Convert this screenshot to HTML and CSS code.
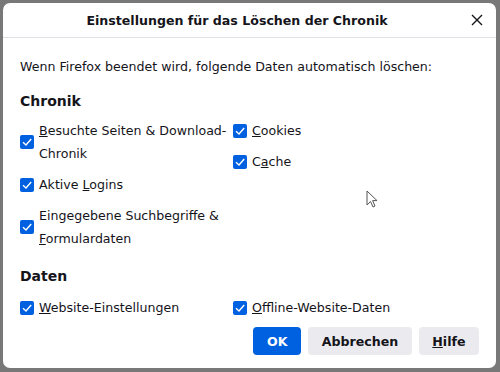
FILE: index.html
```html
<!DOCTYPE html>
<html lang="de">
<head>
    <meta charset="UTF-8">
    <title>Einstellungen für das Löschen der Chronik</title>
    <link rel="stylesheet" href="styles.css">
</head>
<body>
    <div class="dialog">
        <div class="dialog-header">
            <h1>Einstellungen für das Löschen der Chronik</h1>
            <button class="close-btn" aria-label="Schließen">
                <svg width="12" height="12" viewBox="0 0 12 12">
                    <path d="M1 1 L11 11 M11 1 L1 11" stroke="#15141a" stroke-width="1.4" fill="none"/>
                </svg>
            </button>
        </div>

        <div class="dialog-body">
            <p class="intro">Wenn Firefox beendet wird, folgende Daten automatisch löschen:</p>

            <h2 class="section-title chronik">Chronik</h2>
            <div class="option-grid">
                <div class="option-col">
                    <label class="option"><span class="box"></span><span><u>B</u>esuchte Seiten &amp; Download-<br>Chronik</span></label>
                    <label class="option"><span class="box"></span><span>Aktive <u>L</u>ogins</span></label>
                    <label class="option"><span class="box"></span><span>Eingegebene Suchbegriffe &amp;<br><u>F</u>ormulardaten</span></label>
                </div>
                <div class="option-col">
                    <label class="option"><span class="box"></span><span><u>C</u>ookies</span></label>
                    <label class="option"><span class="box"></span><span>C<u>a</u>che</span></label>
                </div>
            </div>

            <h2 class="section-title daten">Daten</h2>
            <div class="option-grid">
                <div class="option-col">
                    <label class="option"><span class="box"></span><span><u>W</u>ebsite-Einstellungen</span></label>
                </div>
                <div class="option-col">
                    <label class="option"><span class="box"></span><span><u>O</u>ffline-Website-Daten</span></label>
                </div>
            </div>

            <div class="button-row">
                <button class="btn btn-primary">OK</button>
                <button class="btn">Abbrechen</button>
                <button class="btn"><u>H</u>ilfe</button>
            </div>
        </div>
    </div>

    <svg class="cursor" width="12" height="19" viewBox="0 0 12 19">
        <path d="M1 1 L1 15 L4.5 11.5 L7 17 L9 16 L6.6 10.6 L11 10.6 Z" fill="#fff" stroke="#555" stroke-width="1"/>
    </svg>
</body>
</html>
```

FILE: styles.css
```css
body {
    margin: 0;
    background: #787878;
    font-family: "DejaVu Sans", sans-serif;
    color: #15141a;
    width: 500px;
    height: 372px;
    overflow: hidden;
}
.dialog {
    margin: 3px 0 0 3px;
    width: 493px;
    height: 365px;
    background: #fff;
    border-radius: 7px;
    box-sizing: border-box;
}
.dialog-header {
    height: 35px;
    border-bottom: 1px solid #e0e0e6;
    display: flex;
    align-items: center;
    box-sizing: border-box;
}
.dialog-header h1 {
    flex: 1;
    margin: 0;
    font-size: 12.6px;
    font-weight: 600;
    text-align: center;
}
.close-btn {
    flex: none;
    width: 12px;
    height: 12px;
    margin: 0 13px 0 0;
    border: none;
    background: none;
    padding: 0;
    display: flex;
    align-items: center;
    justify-content: center;
}
.dialog-body {
    padding: 17px 17px 0 17px;
}
.intro {
    margin: 0;
    font-size: 12.6px;
    line-height: 23px;
}
.section-title {
    margin: 0;
    font-size: 14px;
    font-weight: bold;
    line-height: 23px;
}
.section-title.chronik {
    margin-top: 12px;
    margin-bottom: 6px;
}
.section-title.daten {
    margin-top: 15px;
    margin-bottom: 8px;
}
.option-grid {
    display: grid;
    grid-template-columns: 213px 1fr;
}
.option-col {
    display: flex;
    flex-direction: column;
    gap: 8px;
}
.option {
    display: flex;
    align-items: center;
    gap: 5px;
    font-size: 12.6px;
    line-height: 23px;
}
.box {
    flex: none;
    width: 14px;
    height: 14px;
    border-radius: 2px;
    background: #0061e0 url("data:image/svg+xml,%3Csvg xmlns='http://www.w3.org/2000/svg' viewBox='0 0 14 14'%3E%3Cpath d='M3 7.2 L6 10 L11.2 4' stroke='white' stroke-width='1.4' fill='none'/%3E%3C/svg%3E") no-repeat center;
}
.button-row {
    display: flex;
    justify-content: flex-end;
    gap: 7px;
    margin-top: 8px;
}
.btn {
    font-family: "DejaVu Sans", sans-serif;
    font-size: 12.6px;
    font-weight: bold;
    height: 28px;
    padding: 0 13.5px;
    border: none;
    border-radius: 4px;
    background: #ebebef;
    color: #15141a;
}
.btn-primary {
    background: #0061e0;
    color: #fff;
    width: 48px;
}
.cursor {
    position: absolute;
    left: 366px;
    top: 190px;
}
```
